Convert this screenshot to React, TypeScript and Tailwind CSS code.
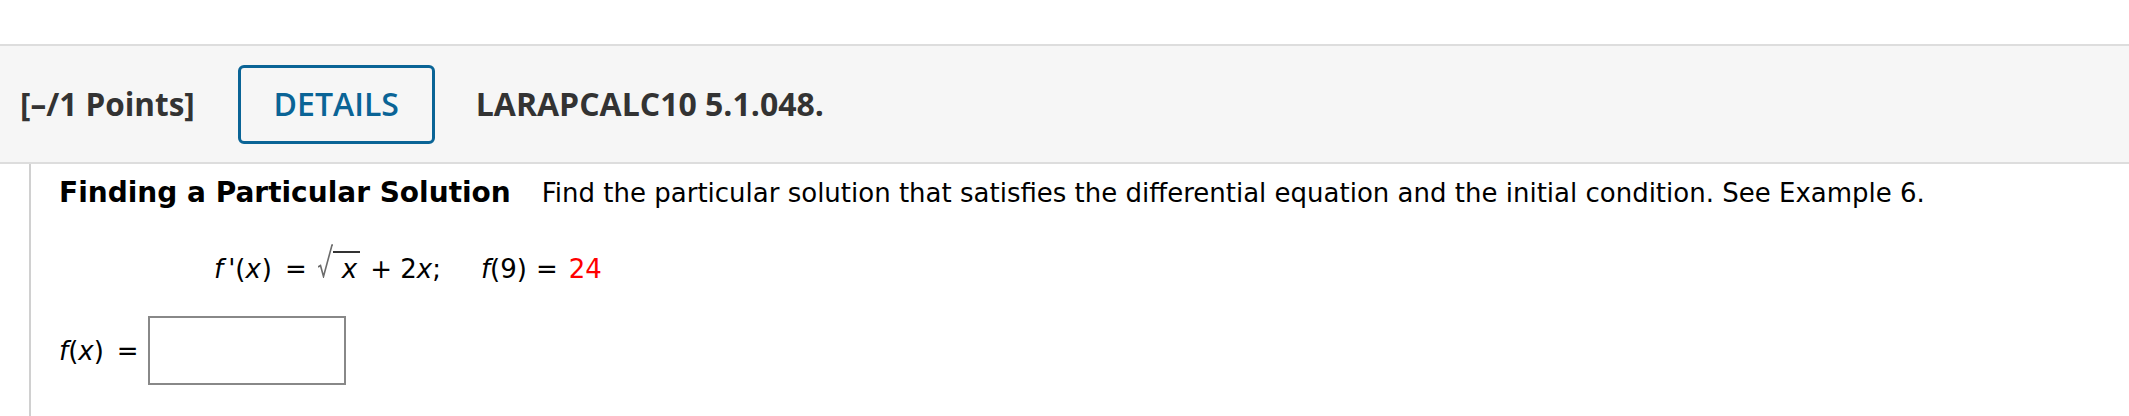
import React from "react";

function Sqrt({ children }: { children: React.ReactNode }) {
  return (
    <span className="inline-flex items-baseline">
      <svg width="15" height="34" viewBox="0 0 15 34" className="align-[-8px] inline-block">
        <path d="M0 23 L2.5 21.5 L5.5 32.5 L14 1 L15 1" fill="none" stroke="#6b6b6b" strokeWidth="1.6" strokeLinejoin="miter" />
      </svg>
      <span className="border-t-[2px] border-[#333333] pl-[9px] pr-[3px]">{children}</span>
    </span>
  );
}

export default function App() {
  return (
    <div className="w-[2129px] h-[416px] bg-white overflow-hidden">
      <div className="h-[44px]" />
      <div className="h-[120px] border-t-2 border-b-2 border-[#dddddd] bg-[#f6f6f6] flex items-center pl-[20px] font-['Open_Sans',sans-serif] text-[#333333]">
        <span className="font-bold text-[31.5px] leading-none">[–/1 Points]</span>
        <div className="ml-[43px] w-[197px] h-[79px] border-[3px] border-[#0a6496] rounded-[6px] flex items-center justify-center text-[#0a6496] text-[32px] font-semibold leading-none">
          DETAILS
        </div>
        <span className="ml-[41px] font-bold text-[32px] leading-none">LARAPCALC10 5.1.048.</span>
      </div>
      <div className="ml-[29px] border-l-2 border-[#d0d0d0] h-[252px] pl-[28px] font-['DejaVu_Sans',Verdana,sans-serif] text-black">
        <div className="pt-[13px] flex items-baseline leading-[32px]">
          <span className="font-bold text-[28px]">Finding a Particular Solution</span>
          <span className="ml-[31px] text-[26px]">Find the particular solution that satisfies the differential equation and the initial condition. See Example 6.</span>
        </div>
        <div className="mt-[35px] ml-[155px] flex items-baseline text-[26px] leading-[32px]">
          <span className="whitespace-nowrap">
            <i>f</i>
            <i className="ml-[5px]">'</i>
            <span>(</span>
            <i>x</i>
            <span className="ml-[1px]">)</span>
          </span>
          <span className="ml-[13px] mr-[11px]">=</span>
          <Sqrt><i>x</i></Sqrt>
          <span className="ml-[10px] whitespace-nowrap">+ 2<i>x</i>;</span>
          <span className="ml-[40px]"><i>f</i>(9)</span>
          <span className="ml-[9px] mr-[11px]">=</span>
          <span className="text-[#ff0000]">24</span>
        </div>
        <div className="mt-[31px] flex items-center text-[26px] leading-[32px]">
          <span><i>f</i>(<i>x</i>)</span>
          <span className="ml-[13px]">=</span>
          <div className="ml-[9px] w-[198px] h-[69px] border-2 border-[#888888] bg-white" />
        </div>
      </div>
    </div>
  );
}
